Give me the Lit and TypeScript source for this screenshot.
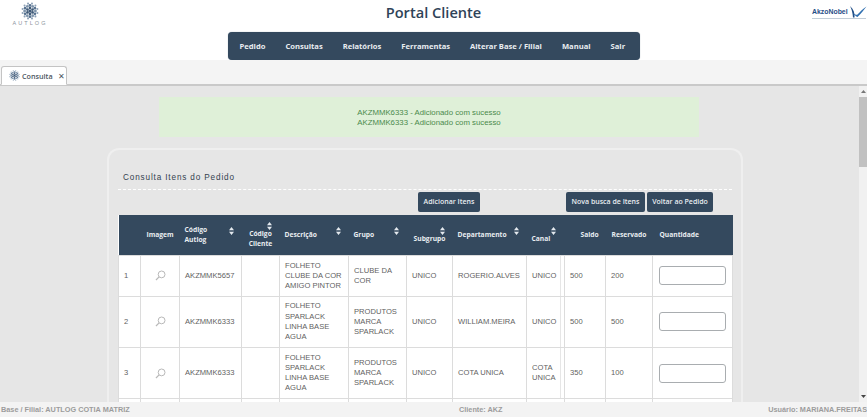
import { LitElement, html, css, svg } from "lit";
import { customElement } from "lit/decorators.js";

type Col = { w: number; label: string[]; mode: "plain" | "row" | "stack"; cls?: string };

const cols: Col[] = [
  { w: 22, label: [], mode: "plain" },
  { w: 39, label: ["Imagem"], mode: "plain", cls: "center" },
  { w: 62, label: ["Código", "Autlog"], mode: "row" },
  { w: 38, label: ["Código", "Cliente"], mode: "stack", cls: "center" },
  { w: 69, label: ["Descrição"], mode: "row" },
  { w: 58, label: ["Grupo"], mode: "row" },
  { w: 46, label: ["Subgrupo"], mode: "stack", cls: "center" },
  { w: 74, label: ["Departamento"], mode: "row" },
  { w: 38, label: ["Canal"], mode: "stack" },
  { w: 41, label: ["Saldo"], mode: "plain", cls: "indent" },
  { w: 47, label: ["Reservado"], mode: "plain", cls: "center" },
  { w: 80, label: ["Quantidade"], mode: "plain", cls: "qty" },
];

const rows = [
  ["1", "AKZMMK5657", "FOLHETO CLUBE DA COR AMIGO PINTOR", "CLUBE DA COR", "UNICO", "ROGERIO.ALVES", "UNICO", "500", "200"],
  ["2", "AKZMMK6333", "FOLHETO SPARLACK LINHA BASE AGUA", "PRODUTOS MARCA SPARLACK", "UNICO", "WILLIAM.MEIRA", "UNICO", "500", "500"],
  ["3", "AKZMMK6333", "FOLHETO SPARLACK LINHA BASE AGUA", "PRODUTOS MARCA SPARLACK", "UNICO", "COTA UNICA", "COTA UNICA", "350", "100"],
];

const menu = ["Pedido", "Consultas", "Relatórios", "Ferramentas", "Alterar Base / Filial", "Manual", "Sair"];

const flakeDots: [number, number, number, string][] = [
  [6.5, 0, 3, "#3f5a78"],
  [12.5, 0, 3, "#587391"],
  [12, 0.52, 2.6, "#7d93aa"],
  [12, -0.52, 2.6, "#7d93aa"],
  [17, 0.26, 2.3, "#8fa3b8"],
  [17, -0.26, 2.3, "#8fa3b8"],
];

function flake(size: number) {
  const dots = [];
  for (let i = 0; i < 6; i++) {
    const a = (Math.PI / 3) * i + Math.PI / 6;
    for (const [r, off, s, c] of flakeDots) {
      dots.push(
        svg`<circle cx=${20 + r * Math.cos(a + off)} cy=${20 + r * Math.sin(a + off)} r=${s} fill=${c}></circle>`
      );
    }
  }
  return html`<svg class="flake" width=${size} height=${size} viewBox="0 0 40 40" aria-hidden="true">
    <circle cx="20" cy="20" r="3.6" fill="#3f5a78"></circle>${dots}
  </svg>`;
}

const sortIcon = html`<svg class="sort" width="5" height="8" viewBox="0 0 5 8" aria-hidden="true">
  <path d="M2.5 0 5 3.2H0z M2.5 8 0 4.8H5z" fill="#e4e9ee"></path>
</svg>`;

const lens = html`<svg class="lens" width="11" height="11" viewBox="0 0 11 11" aria-hidden="true">
  <circle cx="6.6" cy="4.4" r="3.4" fill="none" stroke="#b9b9b9" stroke-width="1"></circle>
  <path d="M4.1 6.9 1 10" stroke="#b9b9b9" stroke-width="1.3" fill="none"></path>
</svg>`;

@customElement("app-root")
export class AppRoot extends LitElement {
  static styles = css`
    :host {
      display: flex;
      flex-direction: column;
      height: 100vh;
      overflow: hidden;
      font-family: "Liberation Sans", Arial, sans-serif;
      background: #e6e6e6;
    }
    .top {
      display: grid;
      grid-template-columns: 1fr 412px 1fr;
      height: 60px;
      background: #fff;
      flex: none;
    }
    .brand {
      display: flex;
      flex-direction: column;
      align-items: center;
      width: 60px;
      color: #8d959d;
      font-size: 5.5px;
      letter-spacing: 2.1px;
      line-height: 6px;
      padding-top: 2px;
    }
    .flake { display: block; flex: none; }
    .center { display: flex; flex-direction: column; align-items: center; }
    h1 {
      margin: 0;
      height: 32px;
      font: 600 14.6px/25px "Open Sans", sans-serif;
      color: #2f4358;
    }
    nav {
      display: flex;
      gap: 20px;
      width: 100%;
      box-sizing: border-box;
      height: 28px;
      align-items: center;
      padding: 0 12px;
      background: #34495e;
      border-radius: 4px;
      font: 700 7.6px/12px "Open Sans", sans-serif;
      color: #e9edf1;
      white-space: nowrap;
      box-shadow: 0 0 1px #8796a5;
    }
    .akzo { justify-self: end; padding: 5px 1px 0 0; width: 54px; }
    .akzo .line {
      display: flex;
      align-items: center;
      height: 13px;
      font: 700 6.9px/13px "Liberation Sans", sans-serif;
      color: #1f4d86;
      border-bottom: 1px solid #c3ced8;
    }
    .akzo svg { flex: none; }
    .tabs {
      flex: none;
      height: 26px;
      box-sizing: border-box;
      background: #f4f4f4;
      border-bottom: 2px solid #c9c9c9;
      display: flex;
      align-items: flex-end;
      padding-left: 1px;
    }
    .tab {
      box-sizing: border-box;
      width: 66px;
      height: 19px;
      margin-bottom: -1px;
      background: #fff;
      border: 1px solid #c4c4c4;
      border-bottom: 1px solid #fff;
      border-radius: 3px 3px 0 0;
      display: flex;
      align-items: center;
      gap: 2px;
      padding-left: 7px;
      font: 600 7.2px/10px "Open Sans", sans-serif;
      color: #4b5560;
    }
    .tab .x { margin-left: 3px; font-size: 8px; color: #4b5560; font-weight: 400; }
    .body { flex: 1; min-height: 0; display: flex; background: #e6e6e6; }
    .main { flex: 1; min-width: 0; overflow: hidden; padding-top: 11px; }
    .scroll {
      flex: none;
      width: 8px;
      background: #f1f1f1;
      display: flex;
      flex-direction: column;
      align-items: center;
      font-size: 0;
    }
    .scroll .arrow {
      flex: none;
      height: 11px;
      display: flex;
      align-items: center;
      justify-content: center;
    }
    .scroll .thumb { flex: none; height: 70px; width: 100%; background: #c1c1c1; }
    .scroll .rest { flex: 1; }
    .alert {
      box-sizing: border-box;
      width: 540px;
      height: 40px;
      margin-left: 159px;
      padding-top: 11px;
      background: #dff0d8;
      color: #4b8a4c;
      text-align: center;
      font-size: 7.8px;
      line-height: 10px;
    }
    .panel {
      box-sizing: border-box;
      width: 636px;
      margin: 11px 0 0 107px;
      padding: 0 9px;
      border: 2px solid #efefef;
      border-bottom: 0;
      border-radius: 12px 12px 0 0;
    }
    .panel h2 {
      margin: 0;
      padding: 22px 0 5px 5px;
      height: 12px;
      font-weight: 400;
      font-size: 8.2px;
      line-height: 12px;
      letter-spacing: 0.85px;
      color: #34424f;
      box-sizing: content-box;
    }
    .rule { border-top: 1px dashed #fff; height: 0; }
    .actions { display: flex; height: 20px; margin-top: 2px; gap: 2px; font-size: 0; }
    button {
      all: unset;
      box-sizing: border-box;
      height: 20px;
      background: #34495e;
      border-radius: 2px;
      color: #e9edf1;
      font: 600 7px/20px "Open Sans", sans-serif;
      text-align: center;
      white-space: nowrap;
    }
    .b1 { width: 62px; margin-left: 300px; }
    .b2 { width: 79px; margin-left: 84px; }
    .b3 { width: 66px; }
    table {
      border-collapse: collapse;
      table-layout: fixed;
      width: 614px;
      margin-top: 3px;
      background: #fff;
    }
    th {
      background: #34495e;
      color: #e9edf1;
      height: 40px;
      padding: 0;
      font: 700 6.7px/10px "Open Sans", sans-serif;
      text-align: left;
      vertical-align: middle;
    }
    .th { display: flex; padding: 0 8px 0 5px; height: 40px; box-sizing: border-box; }
    .th.plain { align-items: center; }
    .th.row { align-items: center; justify-content: space-between; }
    .th.row .sort { margin-top: -8px; }
    .th.stack { flex-direction: column; justify-content: center; }
    .th.stack .sort { align-self: flex-end; margin-right: 1px; margin-bottom: -1px; }
    .th.center.plain { justify-content: center; padding: 0; }
    .th.center.stack { align-items: center; padding: 0; text-align: center; }
    .th.center.stack .sort { margin-right: 8px; }
    .th.indent { padding-left: 16px; }
    .th.qty { padding-left: 7px; }
    td {
      border: 1px solid #dcdcdc;
      padding: 4.5px 5px;
      font-size: 7.6px;
      line-height: 10.3px;
      color: #5f5f5f;
      vertical-align: middle;
    }
    td.ic { text-align: center; padding: 0; }
    td.q { padding-left: 6px; padding-right: 0; }
    td.canal {
      background-image: linear-gradient(#e6e6e6, #e6e6e6);
      background-repeat: no-repeat;
      background-size: 1px 100%;
      background-position: calc(100% - 3px) 0;
    }
    .lens { display: block; margin: 0 auto; }
    input {
      display: block;
      box-sizing: border-box;
      width: 67px;
      height: 19px;
      border: 1px solid #a9adb0;
      border-radius: 3px;
      background: #fff;
      margin: 0;
      padding: 0;
    }
    tr.spacer td { height: 30px; }
    .foot {
      flex: none;
      height: 15px;
      display: grid;
      grid-template-columns: 458px 1fr auto;
      align-items: center;
      background: #f3f3f3;
      color: #9c9c9c;
      font-weight: 700;
      font-size: 7.3px;
      line-height: 10px;
      padding-left: 1px;
      box-sizing: border-box;
      white-space: nowrap;
    }
  `;

  render() {
    return html`
      <header class="top">
        <div class="brand">${flake(18)}<span>AUTLOG</span></div>
        <div class="center">
          <h1>Portal Cliente</h1>
          <nav>${menu.map((m) => html`<span>${m}</span>`)}</nav>
        </div>
        <div class="akzo">
          <div class="line">
            <span>AkzoNobel</span>
            <svg width="19" height="13" viewBox="0 0 19 13" aria-hidden="true">
              <path d="M2 1 C3.5 4 4.5 7 5 12.5 L6.5 12.5 C7 8 5.5 4 2 1Z" fill="#1f4d86"></path>
              <path d="M4.5 8 C6.5 10 8 11.5 9.5 12 C13 9 15.5 5 18.5 1.5 C14.5 4 12 7 9.2 9.8 C7.5 9.8 6 9 4.5 8Z" fill="#2f6fb0"></path>
            </svg>
          </div>
        </div>
      </header>
      <div class="tabs">
        <div class="tab">${flake(11)}<span>Consulta</span><span class="x">✕</span></div>
      </div>
      <div class="body">
        <main class="main">
          <div class="alert">
            <div>AKZMMK6333 - Adicionado com sucesso</div>
            <div>AKZMMK6333 - Adicionado com sucesso</div>
          </div>
          <section class="panel">
            <h2>Consulta Itens do Pedido</h2>
            <div class="rule"></div>
            <div class="actions">
              <button class="b1">Adicionar Itens</button>
              <button class="b2">Nova busca de Itens</button>
              <button class="b3">Voltar ao Pedido</button>
            </div>
            <table>
              <colgroup>${cols.map((c) => html`<col style="width:${c.w}px" />`)}</colgroup>
              <thead>
                <tr>
                  ${cols.map(
                    (c) => html`<th>
                      <div class="th ${c.mode} ${c.cls ?? ""}">
                        ${c.mode === "stack" ? sortIcon : ""}
                        <span>${c.label.map((l, i) => html`${i ? html`<br />` : ""}${l}`)}</span>
                        ${c.mode === "row" ? sortIcon : ""}
                      </div>
                    </th>`
                  )}
                </tr>
              </thead>
              <tbody>
                ${rows.map(
                  (r) => html`<tr>
                    <td>${r[0]}</td>
                    <td class="ic">${lens}</td>
                    <td>${r[1]}</td>
                    <td></td>
                    <td>${r[2]}</td>
                    <td>${r[3]}</td>
                    <td>${r[4]}</td>
                    <td>${r[5]}</td>
                    <td class="canal">${r[6]}</td>
                    <td>${r[7]}</td>
                    <td>${r[8]}</td>
                    <td class="q"><input type="text" aria-label="Quantidade" /></td>
                  </tr>`
                )}
                <tr class="spacer">${cols.map(() => html`<td></td>`)}</tr>
              </tbody>
            </table>
          </section>
        </main>
        <div class="scroll">
          <div class="arrow">
            <svg width="5" height="3" viewBox="0 0 5 3"><path d="M2.5 0 5 3H0z" fill="#777"></path></svg>
          </div>
          <div class="thumb"></div>
          <div class="rest"></div>
          <div class="arrow">
            <svg width="5" height="3" viewBox="0 0 5 3"><path d="M2.5 3 5 0H0z" fill="#444"></path></svg>
          </div>
        </div>
      </div>
      <footer class="foot">
        <span>Base / Filial: AUTLOG COTIA MATRIZ</span>
        <span>Cliente: AKZ</span>
        <span>Usuário: MARIANA.FREITAS</span>
      </footer>
    `;
  }
}
